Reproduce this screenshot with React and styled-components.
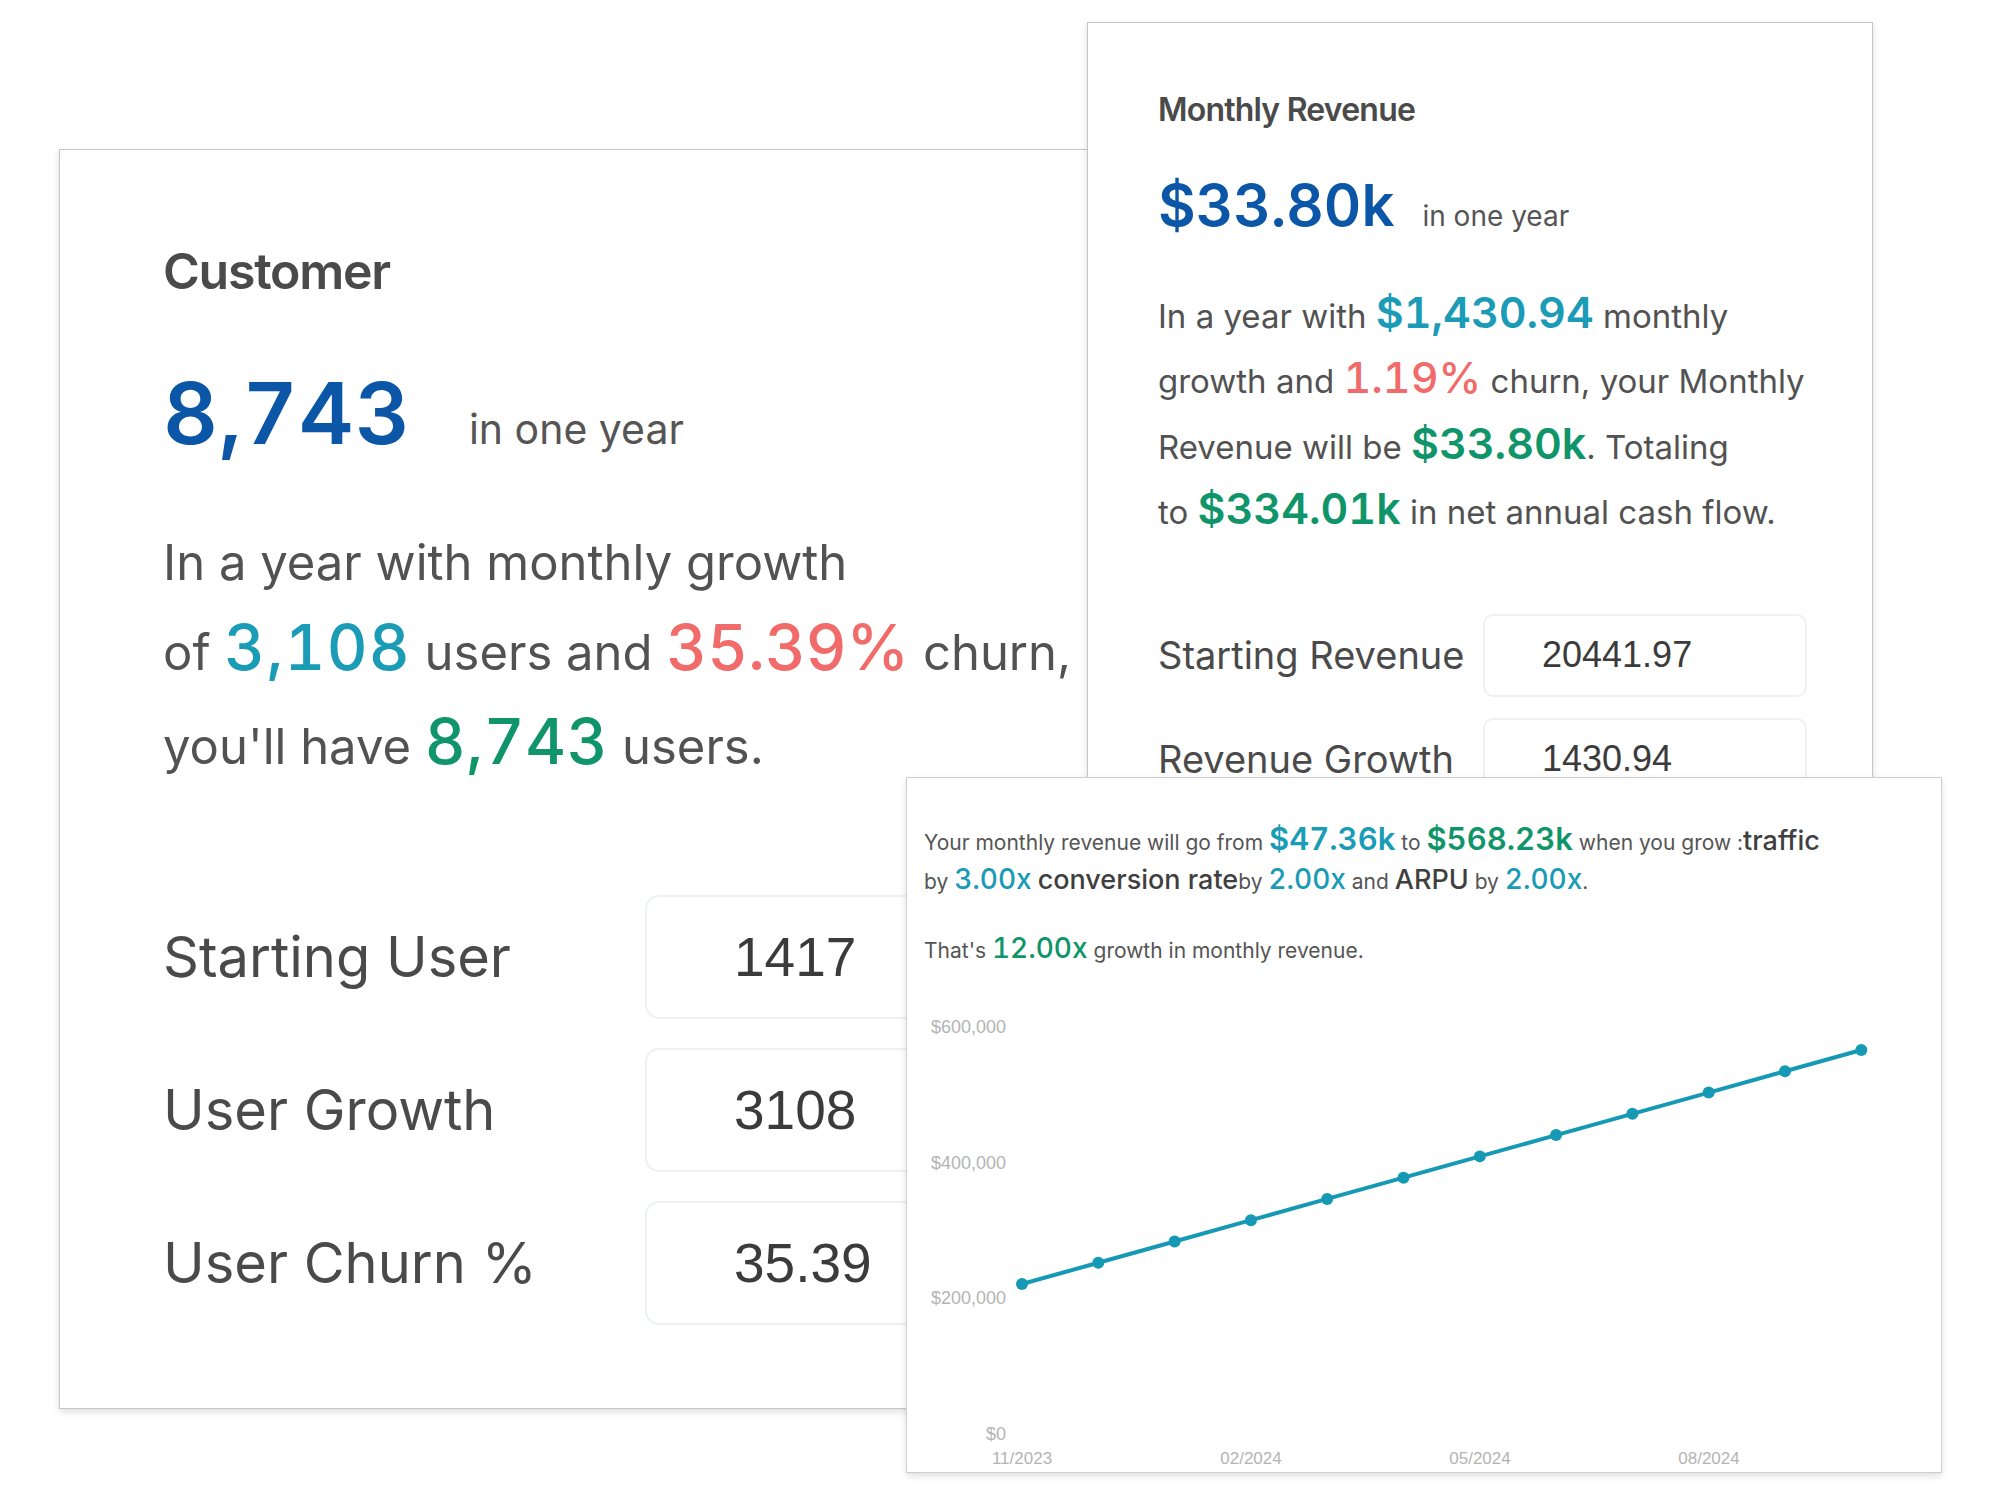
import React from 'react';
import styled, { createGlobalStyle } from 'styled-components';

const GlobalStyle = createGlobalStyle`
  html, body {
    margin: 0;
    padding: 0;
    background: #fff;
  }
  body {
    font-family: Inter, "Noto Sans", sans-serif;
    color: #4a4a4a;
  }
`;

const tones = {
  blue: '#0b56a6',
  teal: '#1a9bb6',
  red: '#f26b6b',
  green: '#10956a',
  ink: '#3f3f3f',
};

const Canvas = styled.div`
  position: relative;
  width: 2000px;
  height: 1493px;
  overflow: hidden;
  background: #fff;
`;

// the three cards are screenshots laid over each other, so they sit on a free canvas
const Panel = styled.section`
  position: absolute;
  box-sizing: border-box;
  background: #fff;
  border: 1px solid #c6c6c6;
  box-shadow: 0 3px 7px rgba(0, 0, 0, 0.13);
  display: flex;
  flex-direction: column;
`;

const CustomerPanel = styled(Panel)`
  left: 59px;
  top: 149px;
  width: 1100px;
  height: 1260px;
  z-index: 1;
  padding: 96px 0 0 103px;
`;

const RevenuePanel = styled(Panel)`
  left: 1087px;
  top: 22px;
  width: 786px;
  height: 800px;
  z-index: 2;
  padding: 71px 0 0 70px;
`;

const ChartPanel = styled(Panel)`
  left: 906px;
  top: 777px;
  width: 1036px;
  height: 696px;
  z-index: 3;
  border-color: #cfcfcf;
`;

const Title = styled.h3`
  margin: 0;
  font-size: ${({ $size }) => $size}px;
  line-height: 1;
  font-weight: 600;
  color: #4a4a4a;
  letter-spacing: -0.025em;
`;

const Headline = styled.div`
  display: flex;
  align-items: baseline;
  gap: ${({ $gap }) => $gap}px;
  margin-top: ${({ $mt }) => $mt}px;
`;

const BigFigure = styled.span`
  font-size: ${({ $size }) => $size}px;
  line-height: 1;
  font-weight: 600;
  color: ${tones.blue};
  font-variant-numeric: tabular-nums;
  letter-spacing: ${({ $track }) => $track || 0}em;
`;

const FigureNote = styled.span`
  font-size: ${({ $size }) => $size}px;
  line-height: 1;
  color: #555;
`;

const Story = styled.p`
  margin: ${({ $mt }) => $mt}px 0 0;
  font-size: ${({ $size }) => $size}px;
  line-height: ${({ $lh }) => $lh || 1.5};
  color: #525252;
  white-space: nowrap;
`;

const Hl = styled.span`
  font-size: ${({ $size }) => $size}px;
  font-weight: ${({ $weight }) => $weight || 600};
  color: ${({ $tone }) => tones[$tone]};
  font-variant-numeric: tabular-nums;
  letter-spacing: ${({ $track }) => $track || 0}em;
`;

const Fields = styled.div`
  display: grid;
  grid-template-columns: ${({ $label }) => $label}px auto;
  row-gap: ${({ $gap }) => $gap}px;
  align-items: center;
  margin-top: ${({ $mt }) => $mt}px;
`;

const FieldLabel = styled.label`
  font-size: ${({ $size }) => $size}px;
  color: #4a4a4a;
  white-space: nowrap;
`;

const FieldInput = styled.input`
  box-sizing: border-box;
  width: ${({ $w }) => $w}px;
  height: ${({ $h }) => $h}px;
  padding: 0 0 0 ${({ $pad }) => $pad}px;
  border: 2px solid #edf1f4;
  border-radius: ${({ $r }) => $r}px;
  background: #fff;
  font-family: "Liberation Sans", Arial, sans-serif;
  font-size: ${({ $size }) => $size}px;
  color: #3b3b3b;
  outline: none;
`;

const ChartText = styled.div`
  padding: 39px 17px 0;
`;

const Lead = styled.p`
  margin: 0;
  font-size: 21px;
  line-height: 1.4;
  color: #555;
  white-space: nowrap;
`;

const Summary = styled(Lead)`
  margin-top: 29px;
`;

const Term = styled.span`
  font-size: 27px;
  font-weight: 500;
  color: ${tones.ink};
`;

const ChartSvg = styled.svg`
  display: block;
  margin-top: auto;
  font-family: "Liberation Sans", Arial, sans-serif;
`;

const yTicks = [
  { label: '$600,000', y: 29 },
  { label: '$400,000', y: 165 },
  { label: '$200,000', y: 300 },
  { label: '$0', y: 436 },
];

const xTicks = [
  { label: '11/2023', x: 115 },
  { label: '02/2024', x: 344 },
  { label: '05/2024', x: 573 },
  { label: '08/2024', x: 802 },
];

const points = Array.from({ length: 12 }, (_, i) => ({
  x: 115 + 76.3 * i,
  y: 287 - 21.27 * i,
}));

function RevenueChart() {
  return (
    <ChartSvg width="1034" height="475" viewBox="0 0 1034 475">
      {yTicks.map((t) => (
        <text key={t.label} x="99" y={t.y + 6.5} textAnchor="end" fontSize="18" fill="#b4b4b4">
          {t.label}
        </text>
      ))}
      {xTicks.map((t) => (
        <text key={t.label} x={t.x} y="467" textAnchor="middle" fontSize="17" fill="#b4b4b4">
          {t.label}
        </text>
      ))}
      <polyline
        points={points.map((p) => `${p.x},${p.y}`).join(' ')}
        fill="none"
        stroke="#1599b4"
        strokeWidth="4"
        strokeLinejoin="round"
      />
      {points.map((p) => (
        <circle key={p.x} cx={p.x} cy={p.y} r="6" fill="#1599b4" />
      ))}
    </ChartSvg>
  );
}

export default function App() {
  return (
    <Canvas>
      <GlobalStyle />

      <CustomerPanel>
        <Title $size={50}>Customer</Title>
        <Headline $gap={58} $mt={75}>
          <BigFigure $size={85} $track={0.012}>8,743</BigFigure>
          <FigureNote $size={41}>in one year</FigureNote>
        </Headline>
        <Story $size={49} $mt={70}>
          In a year with monthly growth
          <br />
          of <Hl $tone="teal" $size={63} $weight={500} $track={0.02}>3,108</Hl> users and{' '}
          <Hl $tone="red" $size={63} $weight={500}>35.39%</Hl> churn,
          <br />
          you'll have <Hl $tone="green" $size={63} $weight={500} $track={0.01}>8,743</Hl> users.
        </Story>
        <Fields $label={482} $gap={29} $mt={106}>
          <FieldLabel $size={56}>Starting User</FieldLabel>
          <FieldInput $w={420} $h={124} $pad={87} $r={14} $size={55} defaultValue="1417" readOnly />
          <FieldLabel $size={56}>User Growth</FieldLabel>
          <FieldInput $w={420} $h={124} $pad={87} $r={14} $size={55} defaultValue="3108" readOnly />
          <FieldLabel $size={56}>User Churn %</FieldLabel>
          <FieldInput $w={420} $h={124} $pad={87} $r={14} $size={55} defaultValue="35.39" readOnly />
        </Fields>
      </CustomerPanel>

      <RevenuePanel>
        <Title $size={32}>Monthly Revenue</Title>
        <Headline $gap={28} $mt={50}>
          <BigFigure $size={58}>$33.80k</BigFigure>
          <FigureNote $size={28}>in one year</FigureNote>
        </Headline>
        <Story $size={33} $mt={46} $lh={1.523}>
          In a year with <Hl $tone="teal" $size={43}>$1,430.94</Hl> monthly
          <br />
          growth and <Hl $tone="red" $size={43} $weight={500}>1.19%</Hl> churn, your Monthly
          <br />
          Revenue will be <Hl $tone="green" $size={43}>$33.80k</Hl>. Totaling
          <br />
          to <Hl $tone="green" $size={43}>$334.01k</Hl> in net annual cash flow.
        </Story>
        <Fields $label={325} $gap={21} $mt={72}>
          <FieldLabel $size={38}>Starting Revenue</FieldLabel>
          <FieldInput $w={324} $h={83} $pad={57} $r={10} $size={36} defaultValue="20441.97" readOnly />
          <FieldLabel $size={38}>Revenue Growth</FieldLabel>
          <FieldInput $w={324} $h={83} $pad={57} $r={10} $size={36} defaultValue="1430.94" readOnly />
        </Fields>
      </RevenuePanel>

      <ChartPanel>
        <ChartText>
          <Lead>
            Your monthly revenue will go from <Hl $tone="teal" $size={31}>$47.36k</Hl> to{' '}
            <Hl $tone="green" $size={31}>$568.23k</Hl> when you grow :<Term>traffic</Term>
            <br />
            by <Hl $tone="teal" $size={28} $weight={500}>3.00x</Hl> <Term>conversion rate</Term>by{' '}
            <Hl $tone="teal" $size={28} $weight={500}>2.00x</Hl> and <Term>ARPU</Term> by{' '}
            <Hl $tone="teal" $size={28} $weight={500}>2.00x</Hl>.
          </Lead>
          <Summary>
            That's <Hl $tone="green" $size={28} $weight={500}>12.00x</Hl> growth in monthly revenue.
          </Summary>
        </ChartText>
        <RevenueChart />
      </ChartPanel>
    </Canvas>
  );
}
